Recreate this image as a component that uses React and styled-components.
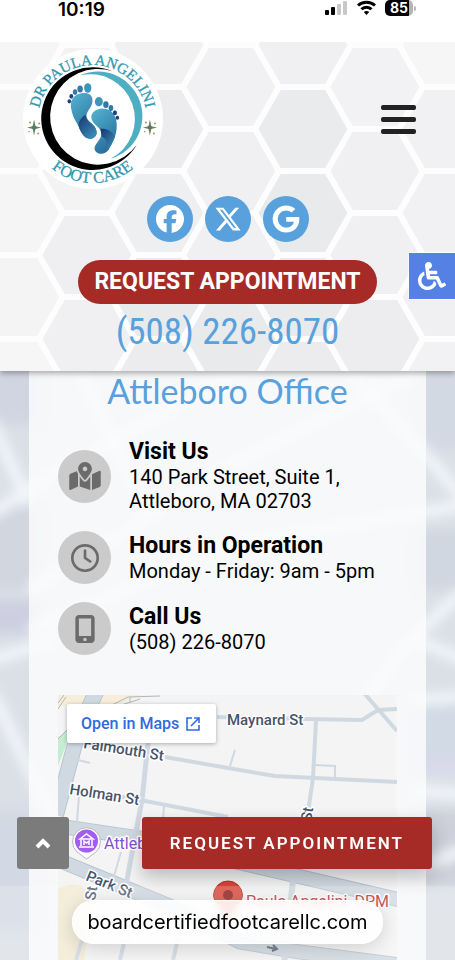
import React from "react";
import styled, { createGlobalStyle } from "styled-components";
import {
  FaFacebook,
  FaXTwitter,
  FaGoogle,
  FaRegClock,
  FaMobileScreenButton,
} from "react-icons/fa6";
import { FaMapMarkedAlt, FaWheelchair } from "react-icons/fa";

const GlobalStyle = createGlobalStyle`
  *, *::before, *::after { box-sizing: border-box; }
  html, body { margin: 0; padding: 0; background: #ffffff; }
  body { font-family: Roboto, "Liberation Sans", sans-serif; color: #000; }
  h1, h2, p, ul { margin: 0; padding: 0; }
  a { color: inherit; text-decoration: none; }
  button { border: 0; padding: 0; font: inherit; cursor: pointer; }
`;

const colors = {
  blue: "#59a1dc",
  red: "#a62b27",
};

const Page = styled.div`
  min-height: 100vh;
  display: flex;
  flex-direction: column;
`;

/* ---------- phone status bar ---------- */

const StatusBar = styled.div`
  height: 42px;
  padding: 0 39px 0 58px;
  display: flex;
  justify-content: space-between;
  align-items: flex-start;
  background: #fff;
`;

const Clock = styled.time`
  font: 600 19px/20px Inter, sans-serif;
`;

const StatusIcons = styled.div`
  display: flex;
  gap: 9px;
  height: 16px;
`;

const Battery = styled.span`
  display: flex;
  align-items: center;
  gap: 1px;
  &::after {
    content: "";
    width: 2px;
    height: 5px;
    border-radius: 0 2px 2px 0;
    background: #b4b4b4;
  }
`;

const BatteryBody = styled.span`
  width: 28px;
  height: 16px;
  border-radius: 5px;
  text-align: center;
  color: #fff;
  background: linear-gradient(90deg, #000 86%, #b4b4b4 86%);
  font: 700 14px/16px Inter, sans-serif;
`;

/* ---------- header ---------- */

const Header = styled.header`
  position: relative;
  z-index: 2;
  isolation: isolate;
  display: flex;
  flex-direction: column;
  align-items: center;
  padding: 7px 0 15px;
  background: #fcfcfc;
  box-shadow: 0 2px 6px rgba(0, 0, 0, 0.35);
  clip-path: inset(0 0 -12px 0);
`;

const Honeycomb = styled.svg`
  position: absolute;
  inset: 0;
  width: 100%;
  height: 100%;
  z-index: -1;
`;

const HeaderTop = styled.div`
  align-self: stretch;
  display: flex;
  justify-content: space-between;
  align-items: center;
  padding: 0 39px 0 23px;
`;

const LogoLink = styled.a`
  display: block;
  width: 140px;
  height: 140px;
`;

const MenuButton = styled.button`
  display: flex;
  flex-direction: column;
  gap: 7px;
  width: 35px;
  background: none;
`;

const MenuBar = styled.span`
  height: 5px;
  border-radius: 2px;
  background: #222;
`;

const Socials = styled.nav`
  display: flex;
  gap: 12px;
  margin-top: 7px;
`;

const SocialLink = styled.a`
  display: grid;
  place-items: center;
  width: 46px;
  height: 46px;
  border-radius: 50%;
  color: #fff;
  font-size: 28px;
  background: ${colors.blue};
`;

const PillLink = styled.a`
  margin-top: 18px;
  padding: 0 16px;
  border-radius: 22px;
  color: #fff;
  background: ${colors.red};
  font-size: 23px;
  font-weight: 700;
  line-height: 44px;
  text-transform: uppercase;
`;

const PhoneLink = styled.a`
  margin-top: 4px;
  color: ${colors.blue};
  font: 400 37px/48px "Roboto Condensed", "Liberation Sans Narrow", Roboto, sans-serif;
`;

const AccessButton = styled.button`
  position: fixed;
  right: 0;
  top: 253px;
  z-index: 3;
  display: grid;
  place-items: center;
  width: 46px;
  height: 46px;
  color: #fff;
  font-size: 28px;
  background: #5581e5;
  box-shadow: 0 0 0 1px rgba(255, 255, 255, 0.6);
`;

/* ---------- office card ---------- */

const Main = styled.main`
  position: relative;
  isolation: isolate;
  flex: 1;
  display: flex;
  padding: 0 29px;
  background: #dbe0e7;
`;

const Backdrop = styled.svg`
  position: absolute;
  inset: 0;
  width: 100%;
  height: 100%;
  z-index: -1;
`;

const Card = styled.section`
  flex: 1;
  min-width: 0;
  display: flex;
  flex-direction: column;
  padding: 0 29px;
  background: rgba(252, 252, 253, 0.85);
`;

const Title = styled.h1`
  color: ${colors.blue};
  text-align: center;
  font: 400 34px/40px Lato, sans-serif;
`;

const InfoList = styled.ul`
  list-style: none;
  display: flex;
  flex-direction: column;
  gap: 18px;
  margin-top: 28px;
`;

const InfoRow = styled.li`
  display: flex;
  align-items: center;
  gap: 18px;
`;

const InfoIcon = styled.span`
  flex: none;
  display: grid;
  place-items: center;
  width: 53px;
  height: 53px;
  border-radius: 50%;
  color: #6b6b6b;
  font-size: 28px;
  background: #cbcbcb;
  & > svg {
    width: 32px;
    height: 28px;
  }
`;

const InfoTitle = styled.h2`
  font-size: 23px;
  font-weight: 700;
  line-height: 26px;
`;

const InfoText = styled.p`
  font-size: 20px;
  line-height: 24px;
`;

const MapFrame = styled.div`
  flex: 1;
  min-height: 265px;
  margin-top: 40px;
  display: grid;
  grid-template: 1fr / 1fr;
  align-items: start;
  justify-items: start;
  background: #f4f4f4;
`;

const MapDrawing = styled.svg`
  grid-area: 1 / 1;
  width: 100%;
  height: 265px;
  font-family: Roboto, sans-serif;
`;

const OpenMapLink = styled.a`
  grid-area: 1 / 1;
  z-index: 1;
  display: flex;
  align-items: center;
  gap: 6px;
  margin: 9px;
  padding: 0 15px 0 14px;
  height: 39px;
  border-radius: 2px;
  color: #2f6be0;
  background: #fff;
  box-shadow: 0 1px 4px rgba(0, 0, 0, 0.3);
  font-size: 16px;
  font-weight: 500;
`;

/* ---------- floating bottom bars ---------- */

const Dock = styled.div`
  position: fixed;
  left: 0;
  right: 0;
  bottom: 0;
  z-index: 4;
`;

const DockActions = styled.div`
  display: flex;
  justify-content: space-between;
  padding: 0 23px 17px 17px;
`;

const TopButton = styled.button`
  display: grid;
  place-items: center;
  width: 52px;
  height: 52px;
  border-radius: 3px;
  color: #fff;
  background: #7b7b7b;
`;

const BookLink = styled.a`
  padding: 0 28px;
  border-radius: 3px;
  color: #fff;
  background: ${colors.red};
  box-shadow: 0 8px 18px rgba(0, 0, 0, 0.24);
  font-size: 17px;
  font-weight: 600;
  line-height: 52px;
  letter-spacing: 2px;
  text-transform: uppercase;
`;

const BrowserBar = styled.div`
  display: flex;
  justify-content: center;
  padding: 14px 0 16px;
  background: rgba(255, 255, 255, 0.2);
`;

const AddressPill = styled.div`
  padding: 0 15px;
  border-radius: 22px;
  background: rgba(255, 255, 255, 0.86);
  backdrop-filter: blur(3px);
  box-shadow: 0 4px 20px rgba(0, 0, 0, 0.16), inset 0 0 0 1px rgba(255, 255, 255, 0.8);
  font: 400 20px/44px Inter, sans-serif;
`;

const HEX_TONES = [
  ["#f6f6f6", "#f5f5f6", "#f5f5f6", "#f4f4f5", "#f6f6f7"],
  ["#f2f2f3", "#f3f3f4", "#efeff1", "#f0f0f2", "#f0f0f2"],
  ["#f1f1f2", "#ececee", "#eeeff1", "#e9eaec", "#ececef"],
  ["#f1f1f3", "#f0f0f2", "#f0f0f2", "#e9eaec", "#ebecee"],
  ["#f0f0f2", "#eaebed", "#e9eaec", "#e9eaec", "#ececee"],
  ["#f2f2f4", "#f0f0f2", "#f0f0f2", "#ededef", "#e9eaec"],
  ["#f6f6f6", "#f1f1f3", "#f1f1f3", "#f0f0f2", "#f2f2f4"],
];

function HoneycombPattern() {
  const cells = [];
  HEX_TONES.forEach((column, c) => {
    column.forEach((tone, r) => {
      const x = 15 + c * 72;
      const y = (c % 2 ? 45 : 3) + r * 84;
      cells.push(
        <polygon
          key={`${c}-${r}`}
          fill={tone}
          points={`${x - 48},${y} ${x - 24},${y - 42} ${x + 24},${y - 42} ${x + 48},${y} ${x + 24},${y + 42} ${x - 24},${y + 42}`}
        />
      );
    });
  });
  return (
    <Honeycomb viewBox="0 0 455 329" preserveAspectRatio="xMidYMin slice" aria-hidden="true">
      <g stroke="#fdfdfd" strokeWidth="6">{cells}</g>
    </Honeycomb>
  );
}

function Sparkle({ x }) {
  return (
    <g transform={`translate(${x} 78)`}>
      <path d="M0 -8 L1.4 -1.4 L7 0 L1.4 1.4 L0 8 L-1.4 1.4 L-7 0 L-1.4 -1.4 Z" fill="#7d7a5a" />
      <circle r="2" fill="#3d8274" />
      <g fill="#a8935f">
        <circle cx="-4" cy="-5" r="1" />
        <circle cx="5" cy="-4" r="1" />
        <circle cx="4" cy="6" r="1" />
        <circle cx="-5" cy="4" r="0.8" />
      </g>
    </g>
  );
}

function Logo() {
  return (
    <svg viewBox="0 0 139 139" width="100%" height="100%" overflow="visible" role="img" aria-label="Dr Paula Angelini Foot Care">
      <defs>
        <linearGradient id="sole" x1="0" y1="0" x2="0.5" y2="1">
          <stop offset="0" stopColor="#56b4cf" />
          <stop offset="0.55" stopColor="#3c8fb5" />
          <stop offset="1" stopColor="#2b6d9d" />
        </linearGradient>
        <linearGradient id="arch" x1="0" y1="0" x2="0.8" y2="1">
          <stop offset="0" stopColor="#16336d" />
          <stop offset="1" stopColor="#3a8fb8" />
        </linearGradient>
        <path id="arcTop" d="M15 70 A54 54 0 0 1 123 70" />
        <path id="arcBottom" d="M5 69 A64 64 0 0 0 133 69" />
      </defs>
      <circle cx="69.5" cy="69.5" r="69.5" fill="#fff" />
      <g fill="#3399af" stroke="#3399af" strokeWidth="0.3" fontFamily="Liberation Serif, serif" fontSize="15" textAnchor="middle">
        <text><textPath href="#arcTop" startOffset="50%">DR PAULA ANGELINI</textPath></text>
        <text fontSize="16"><textPath href="#arcBottom" startOffset="50%">FOOT CARE</textPath></text>
      </g>
      <path d="M88.7 22 A51 51 0 1 0 113 95 A47.5 47.5 0 1 1 88.7 22 Z" fill="#000" />
      <path d="M57 26 A44.2 44.2 0 1 1 87 109 A44.5 44.5 0 0 0 57 26 Z" fill="#4dafc1" />
      <path d="M58 44 C50 45 46 52 48 60 C50 70 54 73 56 79 C59 86 63 90 68 89 C73 88 75 83 71 77 C68 73 63 71 63 66 C64 60 69 58 69 51 C69 45 64 43 58 44 Z" fill="url(#sole)" />
      <path d="M62 65 C57 69 54 73 56 79 C59 86 63 90 68 89 C73 88 75 83 71 77 C68 73 62 71 62 65 Z" fill="url(#arch)" />
      <path d="M78 59 C71 60 67 64 68 69 C69 75 77 77 78 84 C78 90 71 94 71 99 C72 105 81 106 85 100 C89 93 92 88 93 79 C94 70 91 59 78 59 Z" fill="url(#sole)" />
      <path d="M77 79 C83 79 90 82 91 88 C88 94 86 98 84 101 C85 93 82 88 78 87 Z" fill="url(#arch)" />
      <g fill="#3b97ba">
        <ellipse cx="64.3" cy="38.7" rx="3.6" ry="4.8" />
        <ellipse cx="75.3" cy="52.3" rx="4" ry="4.6" />
      </g>
      <g fill="#2f7aa9">
        <ellipse cx="56.7" cy="39.7" rx="2.7" ry="3.5" />
        <ellipse cx="82.3" cy="55.3" rx="2.7" ry="3.3" />
        <ellipse cx="51.7" cy="42.7" rx="2.2" ry="2.8" />
        <ellipse cx="87.3" cy="58.7" rx="2.3" ry="3" />
      </g>
      <g fill="#1f3f82">
        <ellipse cx="48" cy="47" rx="1.9" ry="2.3" />
        <ellipse cx="46" cy="52" rx="1.8" ry="2" />
        <ellipse cx="91.3" cy="63.3" rx="2" ry="2.5" />
        <ellipse cx="93.7" cy="68.3" rx="1.8" ry="2" />
      </g>
      <Sparkle x={11} />
      <Sparkle x={126} />
    </svg>
  );
}

function StreetBackdrop() {
  return (
    <Backdrop viewBox="0 371 455 589" preserveAspectRatio="xMidYMin slice" aria-hidden="true">
      <defs>
        <filter id="soft" x="-20%" y="-20%" width="140%" height="140%">
          <feGaussianBlur stdDeviation="6" />
        </filter>
      </defs>
      <g filter="url(#soft)">
        <rect x="-20" y="360" width="60" height="65" fill="#d0d5e1" />
        <rect x="-20" y="500" width="60" height="90" fill="#d2d6df" />
        <rect x="-20" y="600" width="60" height="34" fill="#cdcfe0" />
        <rect x="-20" y="810" width="60" height="120" fill="#d3d9e4" />
        <rect x="415" y="360" width="60" height="90" fill="#d3d9e3" />
        <rect x="415" y="530" width="60" height="60" fill="#d0d7e0" />
        <rect x="415" y="700" width="60" height="60" fill="#d2dae5" />
        <rect x="415" y="810" width="60" height="75" fill="#cdd0da" />
        <rect x="415" y="762" width="60" height="10" fill="#d9d6ec" />
        <g fill="none" stroke="#f4f7f9" strokeWidth="11">
          <path d="M-10 420 L30 505" />
          <path d="M-10 515 L60 470 L260 360" />
          <path d="M80 370 L150 520" />
          <path d="M30 590 L240 460 L420 370" />
          <path d="M350 370 L465 500" />
          <path d="M30 630 L230 545 L465 505" />
          <path d="M-10 690 L60 830 L150 960" />
          <path d="M465 590 L410 640 L350 720" />
          <path d="M415 640 L465 660" />
          <path d="M410 700 L465 697" />
          <path d="M410 790 L465 795" />
          <path d="M410 870 L465 850" />
          <path d="M-10 660 L60 640" />
        </g>
      </g>
    </Backdrop>
  );
}

function StreetMap() {
  return (
    <MapDrawing viewBox="58 695 339 265" preserveAspectRatio="xMinYMin slice" role="img" aria-label="Map of the streets around the office">
      <rect x="58" y="695" width="700" height="265" fill="#f4f4f4" />
      <path d="M58 695 H143 L112 706 H58 Z" fill="#f6eeda" />
      <path d="M58 888 Q75 882 86 888 Q92 905 88 930 L84 960 H58 Z" fill="#f3ead3" />
      <path d="M58 738 L70 728 L66 745 L58 766 Z" fill="#c6ecd1" />
      <g fill="none" stroke="#b3b6ba" strokeWidth="1">
        <path d="M58 703 L64 695 M58 709 L66 697 M58 739 L67 730 M112 705 L128 697 L160 696 M118 706 L140 699 M130 697 V703" />
      </g>
      <g fill="none" stroke="#b9c4cf">
        <path d="M97 690 Q78 730 72 755 L56 815" strokeWidth="16" />
        <path d="M58 826 L140 838 L228 860 L400 900" strokeWidth="15" />
        <path d="M58 860 L170 906 L240 942 L300 952 L400 965" strokeWidth="15" />
      </g>
      <g fill="none" stroke="#d0d9e1">
        <path d="M97 690 Q78 730 72 755 L56 815" strokeWidth="14" />
        <path d="M58 826 L140 838 L228 860 L400 900" strokeWidth="13" />
        <path d="M58 860 L170 906 L240 942 L300 952 L400 965" strokeWidth="13" />
        <g strokeWidth="4">
          <path d="M217 717 L305 719 L362 720 L378 710 L397 709" />
          <path d="M364 693 L397 731" />
          <path d="M316 721 L313 778 L308 812" />
          <path d="M165 757 L228 768 L275 776 L397 782" />
          <path d="M58 786 L140 800 L228 817" />
          <path d="M88 920 L76 960 M127 930 L120 960 M180 930 L173 960" />
        </g>
        <path d="M148 743 L142 800 L126 885" strokeWidth="5" />
        <path d="M293 880 L284 965" strokeWidth="6" />
        <path d="M74 759 L90 763 M79 795 L77 822 M164 806 L163 820 M235 750 L230 766 M315 765 L335 766 V778 M121 852 L114 876" strokeWidth="2" />
      </g>
      <path d="M267 947 L276 949 M273 945 L277 949 L272 951" stroke="#5a6470" strokeWidth="2" fill="none" />
      <g fontSize="15" fontWeight="500" fill="#47546a" stroke="#fff" strokeWidth="3" strokeLinejoin="round" paintOrder="stroke">
        <text x="227" y="725">Maynard St</text>
        <text transform="translate(83 748) rotate(9)">Falmouth St</text>
        <text transform="translate(69 794) rotate(9)">Holman St</text>
        <text transform="translate(85 880) rotate(22)">Park St</text>
        <text transform="translate(95 901) rotate(-80)">St</text>
        <text transform="translate(311 822) rotate(-80)">St</text>
        <text x="104" y="849" fontSize="16" fontWeight="400" fill="#8250d4">Attleboro</text>
        <text x="246" y="907" fontSize="16" fontWeight="400" fill="#b5332d">Paula Angelini, DPM</text>
      </g>
      <path d="M86.500 859 L77 852 A14 14 0 1 1 96 852 Z" fill="#fff" stroke="#b9b9c4" strokeWidth="1" />
      <circle cx="86.500" cy="841" r="11.500" fill="#a35df2" />
      <path d="M80 839 L86.500 834 L93 839 Z M81 840 V846 M92 840 V846 M79 847 H94 M84 845 V841 L86.500 843 L89 841 V845" fill="none" stroke="#fff" strokeWidth="1.500" />
      <path d="M228 881 A14.500 14.500 0 0 1 242.500 895 C242 905 231 908 228 925 C225 908 214 905 213.500 895 A14.500 14.500 0 0 1 228 881 Z" fill="#dc4437" stroke="#b3302a" strokeWidth="1" />
      <circle cx="228" cy="895" r="5" fill="#8f1a17" />
    </MapDrawing>
  );
}

const SOCIALS = [
  { label: "Facebook", Icon: FaFacebook },
  { label: "X", Icon: FaXTwitter },
  { label: "Google", Icon: FaGoogle },
];

const INFO = [
  { title: "Visit Us", Icon: FaMapMarkedAlt, lines: ["140 Park Street, Suite 1,", "Attleboro, MA 02703"] },
  { title: "Hours in Operation", Icon: FaRegClock, lines: ["Monday - Friday: 9am - 5pm"] },
  { title: "Call Us", Icon: FaMobileScreenButton, lines: ["(508) 226-8070"] },
];

export default function App() {
  return (
    <Page>
      <GlobalStyle />
      <StatusBar>
        <Clock>10:19</Clock>
        <StatusIcons>
          <svg width="23" height="16" viewBox="0 0 23 16" aria-label="Signal">
            <rect x="0" y="10" width="4" height="5" rx="1" />
            <rect x="6" y="7" width="4" height="8" rx="1" />
            <rect x="12" y="4" width="4" height="11" rx="1" fill="#c8c8c8" />
            <rect x="18" y="1" width="4" height="14" rx="1" fill="#c8c8c8" />
          </svg>
          <svg width="19" height="16" viewBox="0 0 19 16" fill="none" stroke="#000" strokeWidth="3" aria-label="Wi-Fi">
            <path d="M1 5.500 C5.500 1 13.500 1 18 5.500" />
            <path d="M4.500 9.300 C7 6.600 12 6.600 14.500 9.300" />
            <path d="M9.500 15 L6.800 12 Q9.500 9.800 12.200 12 Z" fill="#000" stroke="none" />
          </svg>
          <Battery><BatteryBody>85</BatteryBody></Battery>
        </StatusIcons>
      </StatusBar>

      <Header>
        <HoneycombPattern />
        <HeaderTop>
          <LogoLink href="#home"><Logo /></LogoLink>
          <MenuButton type="button" aria-label="Open menu">
            <MenuBar /><MenuBar /><MenuBar />
          </MenuButton>
        </HeaderTop>
        <Socials aria-label="Social links">
          {SOCIALS.map(({ label, Icon }) => (
            <SocialLink key={label} href={`#${label}`} aria-label={label}><Icon /></SocialLink>
          ))}
        </Socials>
        <PillLink href="#appointment">Request Appointment</PillLink>
        <PhoneLink href="tel:5082268070">(508) 226-8070</PhoneLink>
      </Header>

      <AccessButton type="button" aria-label="Accessibility options"><FaWheelchair /></AccessButton>

      <Main>
        <StreetBackdrop />
        <Card>
          <Title>Attleboro Office</Title>
          <InfoList>
            {INFO.map(({ title, Icon, lines }) => (
              <InfoRow key={title}>
                <InfoIcon><Icon /></InfoIcon>
                <div>
                  <InfoTitle>{title}</InfoTitle>
                  {lines.map((line) => <InfoText key={line}>{line}</InfoText>)}
                </div>
              </InfoRow>
            ))}
          </InfoList>
          <MapFrame>
            <StreetMap />
            <OpenMapLink href="#map">
              Open in Maps
              <svg width="16" height="16" viewBox="0 0 16 16" fill="none" stroke="currentColor" strokeWidth="1.600" aria-hidden="true">
                <path d="M7 2 H2 V14 H14 V9 M9 2 H14 V7 M14 2 L6 10" />
              </svg>
            </OpenMapLink>
          </MapFrame>
        </Card>
      </Main>

      <Dock>
        <DockActions>
          <TopButton type="button" aria-label="Back to top">
            <svg width="16" height="12" viewBox="0 0 16 12" fill="none" stroke="currentColor" strokeWidth="4" aria-hidden="true">
              <path d="M2 10 L8 4 L14 10" />
            </svg>
          </TopButton>
          <BookLink href="#appointment">Request Appointment</BookLink>
        </DockActions>
        <BrowserBar>
          <AddressPill>boardcertifiedfootcarellc.com</AddressPill>
        </BrowserBar>
      </Dock>
    </Page>
  );
}
